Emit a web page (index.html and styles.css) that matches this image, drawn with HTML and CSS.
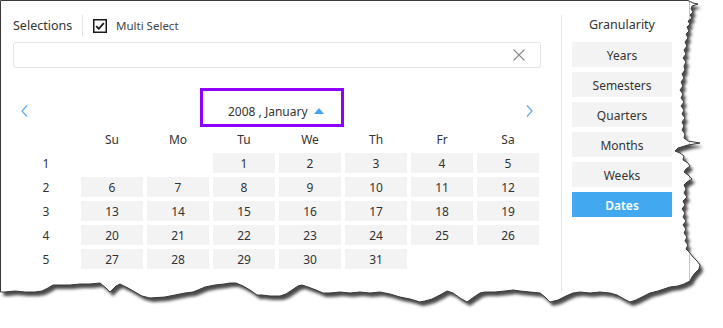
FILE: index.html
```html
<!DOCTYPE html>
<html>
<head>
<meta charset="utf-8">
<link rel="stylesheet" href="styles.css">
</head>
<body>
<svg class="paper" width="723" height="328" viewBox="0 0 723 328">
  <defs>
    <path id="edge" d="M0.5,0.5 L688,0.5 L693,3 L698,4 L692,6 L691,9 L693,12 L690,15 L692,18 L688,21 L690,24 L687,27 L689,31 L686,34 L688,38 L685,42 L687,46 L684,50 L686,54 L683,58 L686,62 L684,66 L685,70 L682,74 L684,78 L681,82 L683,86 L680,90 L683,94 L681,98 L684,102 L681,106 L684,110 L682,114 L685,118 L682,122 L684,126 L682,130 L685,134 L684,138 L688,141 L700,143 L688,145 L678,148 L675,151 L680,153 L684,156 L683,160 L688,163 L690,166 L686,169 L684,172 L688,175 L692,179 L687,182 L684,185 L686,189 L684,193 L687,197 L683,201 L685,205 L682,209 L685,213 L683,217 L686,221 L683,225 L686,229 L684,233 L687,237 L685,241 L688,245 L686,249 L690,253 L693,257 L697,261 L700,265 L699,269 L695,273 L692,277 L690,281 L684,284 L678,286 L670,287 L664,289 L658,291 L650,293 L644,296 L636,300 L630,302 L624,299 L617,295 L610,293 L600,292 L590,293 L580,292 L573,293 L566,296 L558,300 L550,302 L545,297 L540,293 L530,292 L520,291 L513,290 L505,291 L495,292 L485,292 L480,293 L474,297 L467,302 L460,298 L453,293 L447,291 L440,295 L432,299 L425,301 L420,302 L410,299 L400,297 L390,294 L380,292 L370,293 L360,292 L350,293 L340,292 L330,293 L323,293 L316,290 L308,287 L302,285 L298,286 L292,290 L286,294 L280,296 L270,296 L262,295 L257,295 L250,290 L243,286 L236,283 L230,283 L224,284 L215,285 L205,287 L198,290 L193,292 L185,293 L175,295 L165,297 L150,298 L142,296 L135,292 L128,288 L120,284 L116,286 L110,292 L106,288 L100,283 L90,284 L80,284 L70,285 L60,285 L53,285 L48,288 L42,291 L35,292 L25,292 L15,291 L5,292 L0.5,292 Z"/>
    <filter id="blur" x="-5%" y="-5%" width="115%" height="115%">
      <feGaussianBlur stdDeviation="1.6"/>
    </filter>
    <clipPath id="clip"><use href="#edge"/></clipPath>
  </defs>
  <use href="#edge" transform="translate(3,4)" fill="#4a4a4a" filter="url(#blur)"/>
  <use href="#edge" fill="#fff"/>
  <line x1="689.5" y1="0" x2="689.5" y2="300" stroke="#c4c4c4" clip-path="url(#clip)"/>
  <use href="#edge" fill="none" stroke="#3a3a3a" stroke-width="1"/>
</svg>

<div class="app">
  <div class="main">
    <div class="toolbar">
      <span class="title">Selections</span>
      <span class="vsep"></span>
      <span class="check">
        <svg class="box" width="14" height="14" viewBox="0 0 14 14">
          <rect x="0.75" y="0.75" width="12.5" height="12.5" fill="#fff" stroke="#1a1a1a" stroke-width="1.5"/>
          <path d="M3.2,7.2 L5.8,9.8 L10.8,4.2" fill="none" stroke="#1a1a1a" stroke-width="1.8"/>
        </svg>
        <span class="check-label">Multi Select</span>
      </span>
    </div>

    <div class="search">
      <svg class="clear" width="12" height="12" viewBox="0 0 12 12">
        <path d="M0.5,0.5 L11.5,11.5 M11.5,0.5 L0.5,11.5" stroke="#8a8a8a" stroke-width="1.1" fill="none"/>
      </svg>
    </div>

    <div class="nav">
      <svg class="chev chev-left" width="7" height="12" viewBox="0 0 7 12">
        <path d="M6,0.5 L1,6 L6,11.5" fill="none" stroke="#5aaaf0" stroke-width="1.2"/>
      </svg>
      <div class="period">
        <span class="period-text">2008 , January</span>
        <span class="tri"></span>
      </div>
      <svg class="chev chev-right" width="7" height="12" viewBox="0 0 7 12">
        <path d="M1,0.5 L6,6 L1,11.5" fill="none" stroke="#5aaaf0" stroke-width="1.2"/>
      </svg>
    </div>

    <div class="cal">
      <span class="hd"></span><span class="hd">Su</span><span class="hd">Mo</span><span class="hd">Tu</span><span class="hd">We</span><span class="hd">Th</span><span class="hd">Fr</span><span class="hd">Sa</span>

      <span class="wk">1</span><span class="empty"></span><span class="empty"></span><span class="day">1</span><span class="day">2</span><span class="day">3</span><span class="day">4</span><span class="day">5</span>

      <span class="wk">2</span><span class="day">6</span><span class="day">7</span><span class="day">8</span><span class="day">9</span><span class="day">10</span><span class="day">11</span><span class="day">12</span>

      <span class="wk">3</span><span class="day">13</span><span class="day">14</span><span class="day">15</span><span class="day">16</span><span class="day">17</span><span class="day">18</span><span class="day">19</span>

      <span class="wk">4</span><span class="day">20</span><span class="day">21</span><span class="day">22</span><span class="day">23</span><span class="day">24</span><span class="day">25</span><span class="day">26</span>

      <span class="wk">5</span><span class="day">27</span><span class="day">28</span><span class="day">29</span><span class="day">30</span><span class="day">31</span><span class="empty"></span><span class="empty"></span>
    </div>
  </div>

  <div class="divider"></div>

  <div class="side">
    <div class="side-title">Granularity</div>
    <div class="gran">Years</div>
    <div class="gran">Semesters</div>
    <div class="gran">Quarters</div>
    <div class="gran">Months</div>
    <div class="gran">Weeks</div>
    <div class="gran active">Dates</div>
  </div>
</div>
</body>
</html>
```

FILE: styles.css
```css
* { box-sizing: border-box; }

html, body {
  margin: 0;
  padding: 0;
  background: #fff;
}

body {
  position: relative;
  width: 723px;
  height: 328px;
  overflow: hidden;
  font-family: "Noto Sans", "Open Sans", sans-serif;
  font-size: 12px;
  color: #333;
}

.paper {
  position: absolute;
  left: 0;
  top: 0;
  z-index: 0;
}

.app {
  position: relative;
  z-index: 1;
  display: flex;
  padding: 15px 0 0 13px;
}

.main {
  width: 528px;
}

.toolbar {
  height: 21px;
  display: flex;
  align-items: center;
}

.title {
  width: 69px;
  font-size: 12.5px;
  color: #333;
  white-space: nowrap;
}

.vsep {
  width: 1px;
  height: 21px;
  background: #e3e3e3;
}

.check {
  margin-left: 10px;
  display: flex;
  align-items: center;
}

.box {
  display: block;
}

.check-label {
  margin-left: 9px;
  font-size: 11.5px;
  color: #444;
}

.search {
  margin-top: 6px;
  height: 26px;
  border: 1px solid #e3e3e3;
  border-radius: 3px;
  display: flex;
  justify-content: flex-end;
  align-items: center;
  padding-right: 15px;
}

.clear {
  display: block;
}

.nav {
  margin-top: 20px;
  height: 39px;
  display: grid;
  grid-template-columns: 1fr auto 1fr;
  align-items: end;
}

.chev {
  display: block;
  margin-bottom: 10px;
}

.chev-left {
  justify-self: start;
  margin-left: 8px;
}

.chev-right {
  justify-self: end;
  margin-right: 8px;
}

.period {
  width: 144px;
  height: 39px;
  margin-right: 10px;
  border: 3px solid #8f00ff;
  display: flex;
  align-items: center;
  padding: 8px 0 0 25px;
}

.period-text {
  font-size: 12px;
  color: #333;
  white-space: nowrap;
}

.tri {
  margin-left: 6px;
  width: 0;
  height: 0;
  border-left: 5px solid transparent;
  border-right: 5px solid transparent;
  border-bottom: 6px solid #42a5f5;
  margin-top: -1px;
}

.cal {
  margin: 2px 0 0 2px;
  display: grid;
  grid-template-columns: repeat(8, 62px);
  grid-auto-rows: 20px;
  gap: 4px;
}

.cal span {
  display: flex;
  align-items: center;
  justify-content: center;
  font-size: 12px;
  color: #333;
}

.cal .day {
  background: #f3f3f3;
}

.divider {
  margin-left: 20px;
  width: 1px;
  height: 278px;
  background: #e6e6e6;
}

.side {
  margin-left: 10px;
  width: 100px;
}

.side-title {
  height: 20px;
  line-height: 20px;
  text-align: center;
  font-size: 12.5px;
  color: #333;
  margin-bottom: 7px;
}

.gran {
  height: 25px;
  margin-bottom: 5px;
  padding-top: 1px;
  background: #f3f3f3;
  display: flex;
  align-items: center;
  justify-content: center;
  font-size: 12px;
  color: #333;
}

.gran.active {
  background: #42a8f0;
  color: #fff;
  font-weight: 600;
}
```
